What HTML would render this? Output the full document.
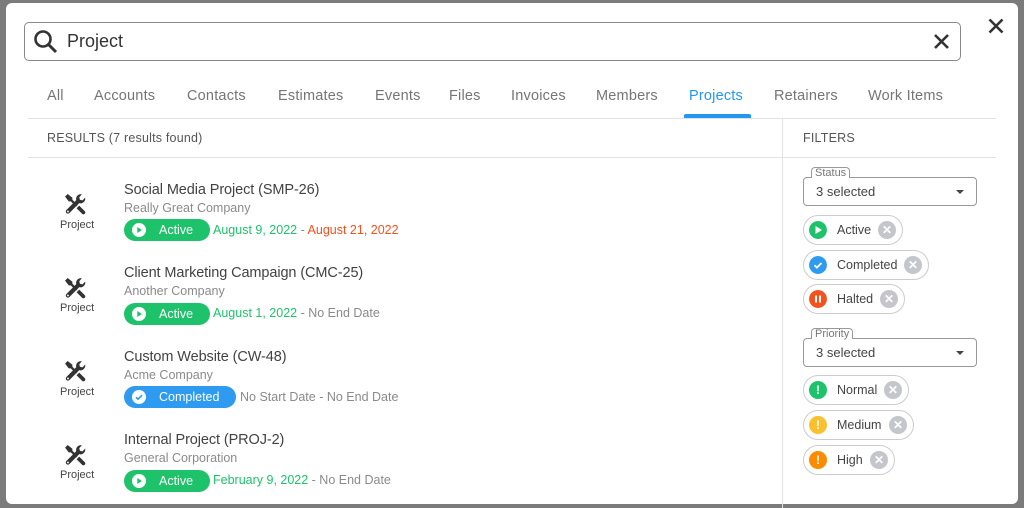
<!DOCTYPE html><html><head><style>
*{box-sizing:border-box;margin:0;padding:0}
body{width:1024px;height:508px;background:#7b7b7b;font-family:"Liberation Sans",sans-serif;position:relative;overflow:hidden}
.modal{position:absolute;left:6px;top:3px;width:1012px;height:501px;background:#fff;border-radius:6px}
.abs{position:absolute}
.search{width:937px;height:39px;border:1px solid #888;border-radius:5px}
.tabs span{position:absolute;top:88px;font-size:14.5px;color:#757575;letter-spacing:.2px}
.hr{position:absolute;height:1px;background:#e2e2e2}
.t{position:absolute;font-size:14.5px;color:#424242;letter-spacing:-.1px}
.sub{position:absolute;font-size:12.5px;color:#8a8a8a}
.pill{position:absolute;height:22px;border-radius:11px;color:#fff;font-size:12.5px;line-height:22px}
.pill svg{position:absolute;left:8px;top:4px}
.dates{position:absolute;font-size:12.5px;color:#8a8a8a}
.chip{position:absolute;left:803px;height:30px;border:1px solid #ccc;border-radius:15px;font-size:12.5px;color:#444;line-height:28px;padding-left:33px}
.chip .c{position:absolute;left:5px;top:5px;width:18px;height:18px;border-radius:50%;color:#fff;font-size:12px;font-weight:bold;text-align:center;line-height:18px}
.chip .x{position:absolute;right:6px;top:5px;width:18px;height:18px;border-radius:50%;background:#c5c5cc;color:#fff;font-size:12px;line-height:18px;text-align:center;font-weight:bold}
.sel{position:absolute;left:803px;width:174px;height:29px;border:1px solid #999;border-radius:4px;font-size:13px;color:#444;padding:6px 12px}
.sel:after{content:"";position:absolute;right:12px;top:12px;border:4px solid transparent;border-top:4px solid #444}
.lbl{position:absolute;left:811px;font-size:11px;color:#777;background:#fff;padding:0 3px;border:1px solid #999;border-bottom:none;border-radius:4px 4px 0 0;height:11px;line-height:11px}
.ic{position:absolute;left:64px}
.pl{position:absolute;left:60px;font-size:11px;color:#444}
</style></head><body>
<div class="modal"></div>
<div class="abs search" style="left:24px;top:22px"></div>
<svg class="abs" style="left:33px;top:29px" width="26" height="26" viewBox="0 0 26 26"><circle cx="10" cy="10" r="7.5" fill="none" stroke="#333" stroke-width="2.6"/><path d="M15.5 15.5L23 23" stroke="#333" stroke-width="3"/></svg>
<div class="abs" style="left:67px;top:31px;font-size:18px;color:#333">Project</div>
<svg class="abs" style="left:933px;top:33px" width="17" height="17"><path d="M2 2L15 15M15 2L2 15" stroke="#333" stroke-width="2.6"/></svg>
<svg class="abs" style="left:988px;top:18px" width="16" height="16"><path d="M1.5 1.5L14.5 14.5M14.5 1.5L1.5 14.5" stroke="#333" stroke-width="2.6"/></svg>
<div class="tabs"><span style="left:47px">All</span><span style="left:94px">Accounts</span><span style="left:187px">Contacts</span><span style="left:278px">Estimates</span><span style="left:375px">Events</span><span style="left:449px">Files</span><span style="left:511px">Invoices</span><span style="left:596px">Members</span><span style="left:689px;color:#2196f3">Projects</span><span style="left:774px">Retainers</span><span style="left:868px">Work Items</span></div>
<div class="abs" style="left:684px;top:114px;width:67px;height:4px;background:#2196f3;border-radius:2px 2px 0 0"></div>
<div class="hr" style="left:28px;top:118px;width:968px"></div>
<div class="hr" style="left:28px;top:157px;width:968px"></div>
<div class="abs" style="left:782px;top:119px;width:1px;height:389px;background:#e2e2e2"></div>
<div class="abs" style="left:47px;top:131px;font-size:12.5px;color:#555;letter-spacing:.2px">RESULTS (7 results found)</div>
<div class="abs" style="left:803px;top:131px;font-size:12.5px;color:#555;letter-spacing:.2px">FILTERS</div>

<svg width="0" height="0" style="position:absolute"><defs>
<g id="tools" fill="#333"><path d="M1 3.5L3.5 1L8 4.5V6.5L13 11.5L11.5 13L6.5 8H4.5Z"/><path d="M17 1.2a4.5 4.5 0 0 0-5.3 5.6L2.3 16.2a2 2 0 0 0 2.9 2.9l9.4-9.4a4.5 4.5 0 0 0 5.6-5.3l-2.6 2.6-2.4-.6-.6-2.4z"/><path d="M12 14.5L14.5 12L20 17.5a1.8 1.8 0 0 1-2.5 2.5Z"/><circle cx="3.8" cy="17.6" r="0.9" fill="#fff"/></g>
<g id="play"><circle cx="7" cy="7" r="7" fill="#fff"/><path d="M5.3 4v6l4.7-3z" fill="#1ec26b"/></g>
<g id="chk"><circle cx="7" cy="7" r="7" fill="#fff"/><path d="M4 7.2l2 2 4-4" stroke="#2e9bf0" stroke-width="1.6" fill="none"/></g>
</defs></svg>

<svg class="ic" style="top:193px" width="22" height="22" viewBox="0 0 21 21"><use href="#tools"/></svg><div class="pl" style="top:219px">Project</div>
<div class="t" style="left:124px;top:182px">Social Media Project (SMP-26)</div>
<div class="sub" style="left:124px;top:201px">Really Great Company</div>
<div class="pill" style="left:124px;top:219px;width:86px;background:#1ec26b;padding-left:35px"><svg width="14" height="14"><use href="#play"/></svg>Active</div>
<div class="dates" style="left:213px;top:223px"><span style="color:#1ec26b">August 9, 2022</span> - <span style="color:#f4511e">August 21, 2022</span></div>

<svg class="ic" style="top:277px" width="22" height="22" viewBox="0 0 21 21"><use href="#tools"/></svg><div class="pl" style="top:302px">Project</div>
<div class="t" style="left:124px;top:265px">Client Marketing Campaign (CMC-25)</div>
<div class="sub" style="left:124px;top:284px">Another Company</div>
<div class="pill" style="left:124px;top:303px;width:86px;background:#1ec26b;padding-left:35px"><svg width="14" height="14"><use href="#play"/></svg>Active</div>
<div class="dates" style="left:213px;top:306px"><span style="color:#1ec26b">August 1, 2022</span> - No End Date</div>

<svg class="ic" style="top:360px" width="22" height="22" viewBox="0 0 21 21"><use href="#tools"/></svg><div class="pl" style="top:386px">Project</div>
<div class="t" style="left:124px;top:349px">Custom Website (CW-48)</div>
<div class="sub" style="left:124px;top:368px">Acme Company</div>
<div class="pill" style="left:124px;top:386px;width:112px;background:#2e9bf0;padding-left:35px"><svg width="14" height="14"><use href="#chk"/></svg>Completed</div>
<div class="dates" style="left:240px;top:390px">No Start Date - No End Date</div>

<svg class="ic" style="top:444px" width="22" height="22" viewBox="0 0 21 21"><use href="#tools"/></svg><div class="pl" style="top:469px">Project</div>
<div class="t" style="left:124px;top:432px">Internal Project (PROJ-2)</div>
<div class="sub" style="left:124px;top:451px">General Corporation</div>
<div class="pill" style="left:124px;top:470px;width:86px;background:#1ec26b;padding-left:35px"><svg width="14" height="14"><use href="#play"/></svg>Active</div>
<div class="dates" style="left:213px;top:473px"><span style="color:#1ec26b">February 9, 2022</span> - No End Date</div>

<div class="sel" style="top:177px">3 selected</div><div class="lbl" style="top:167px">Status</div>
<div class="chip" style="top:215px;width:100px"><svg class="c" viewBox="0 0 18 18"><circle cx="9" cy="9" r="9" fill="#1ec26b"/><path d="M6.5 5v8l6.5-4z" fill="#fff"/></svg>Active<span class="x">✕</span></div>
<div class="chip" style="top:250px;width:126px"><svg class="c" viewBox="0 0 18 18"><circle cx="9" cy="9" r="9" fill="#2e9bf0"/><path d="M5.5 9.2l2.4 2.4 4.6-4.6" stroke="#fff" stroke-width="1.8" fill="none"/></svg>Completed<span class="x">✕</span></div>
<div class="chip" style="top:284px;width:102px"><svg class="c" viewBox="0 0 18 18"><circle cx="9" cy="9" r="9" fill="#f4511e"/><rect x="6" y="5.5" width="2" height="7" fill="#fff"/><rect x="10" y="5.5" width="2" height="7" fill="#fff"/></svg>Halted<span class="x">✕</span></div>
<div class="sel" style="top:338px">3 selected</div><div class="lbl" style="top:328px">Priority</div>
<div class="chip" style="top:375px;width:106px"><span class="c" style="background:#1ec26b">!</span>Normal<span class="x">✕</span></div>
<div class="chip" style="top:410px;width:111px"><span class="c" style="background:#fbc02d">!</span>Medium<span class="x">✕</span></div>
<div class="chip" style="top:445px;width:92px"><span class="c" style="background:#fb8c00">!</span>High<span class="x">✕</span></div>
</body></html>
